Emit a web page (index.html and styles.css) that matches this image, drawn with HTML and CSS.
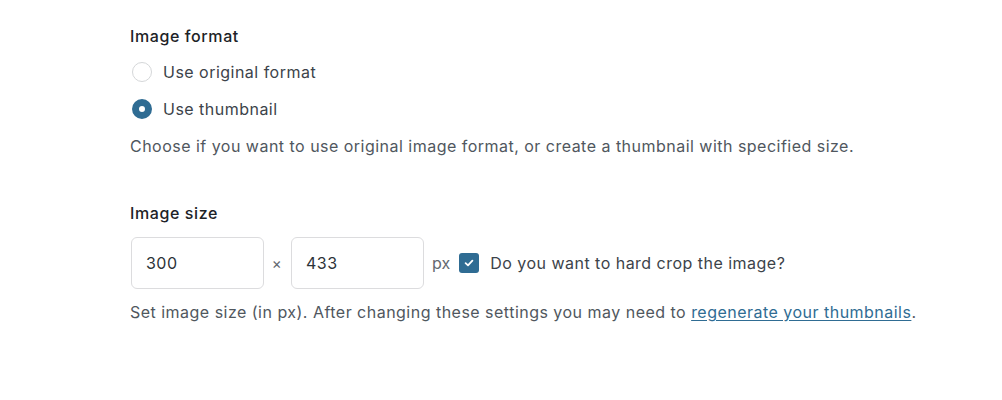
FILE: index.html
```html
<!DOCTYPE html>
<html>
<head>
<meta charset="utf-8">
<link rel="stylesheet" href="styles.css">
</head>
<body>
<div class="panel">
  <section class="field">
    <h3 class="field-title">Image format</h3>
    <div class="radio-list">
      <label class="radio-row"><span class="radio"></span><span>Use original format</span></label>
      <label class="radio-row"><span class="radio checked"></span><span>Use thumbnail</span></label>
    </div>
    <p class="help">Choose if you want to use original image format, or create a thumbnail with specified size.</p>
  </section>
  <section class="field size-field">
    <h3 class="field-title">Image size</h3>
    <div class="size-row">
      <div class="input">300</div>
      <span class="times">×</span>
      <div class="input">433</div>
      <span class="unit">px</span>
      <span class="checkbox"><svg width="12" height="12" viewBox="0 0 12 12"><path d="M2.6 6.2 L5 8.4 L9.4 3.6" fill="none" stroke="#fff" stroke-width="1.8" stroke-linecap="round" stroke-linejoin="round"/></svg></span>
      <span class="check-label">Do you want to hard crop the image?</span>
    </div>
    <p class="help help-size">Set image size (in px). After changing these settings you may need to <a href="#" class="link">regenerate your thumbnails</a>.</p>
  </section>
</div>
</body>
</html>
```
FILE: styles.css
```css
html, body {
  margin: 0;
  padding: 0;
  background: #fff;
}
body {
  font-family: Inter, "Noto Sans", sans-serif;
  font-size: 16px;
  letter-spacing: 0.48px;
  color: #3c434a;
}
.panel {
  padding: 26px 0 0 130px;
}
.field-title {
  margin: 0;
  font-size: 16px;
  font-weight: 500;
  color: #1d2327;
  line-height: 20px;
  letter-spacing: 0.6px;
}
.radio-list {
  display: flex;
  flex-direction: column;
  gap: 17px;
  margin-top: 16px;
}
.radio-row {
  display: flex;
  align-items: center;
  gap: 11px;
  line-height: 20px;
  color: #3c434a;
}
.radio {
  box-sizing: border-box;
  width: 20px;
  height: 20px;
  border-radius: 50%;
  border: 1px solid #d5d7d9;
  margin-left: 2px;
  background: #fff;
}
.radio.checked {
  border: 7px solid #2f6c93;
  background: #fff;
}
.help {
  margin: 17px 0 0;
  line-height: 20px;
  color: #50575e;
}
.help-size {
  margin-top: 13px;
}
.size-field {
  margin-top: 47px;
}
.size-row {
  display: flex;
  align-items: center;
  margin-top: 14px;
}
.input {
  box-sizing: border-box;
  width: 133px;
  height: 52px;
  border: 1px solid #dcdcde;
  border-radius: 6px;
  padding: 0 14px;
  display: flex;
  align-items: center;
  font-size: 16px;
  color: #2c3338;
  margin-left: 1px;
}
.times {
  width: 26px;
  text-align: center;
  font-size: 15px;
  color: #646970;
}
.unit {
  margin-left: 8px;
  color: #646970;
  letter-spacing: 0;
}
.checkbox {
  box-sizing: border-box;
  width: 20px;
  height: 20px;
  border-radius: 3px;
  background: #2f6c93;
  margin-left: 9px;
  display: flex;
  align-items: center;
  justify-content: center;
}
.check-label {
  margin-left: 11px;
}
.link {
  color: #2f6c93;
  text-decoration: underline;
  text-underline-offset: 2px;
}
```
